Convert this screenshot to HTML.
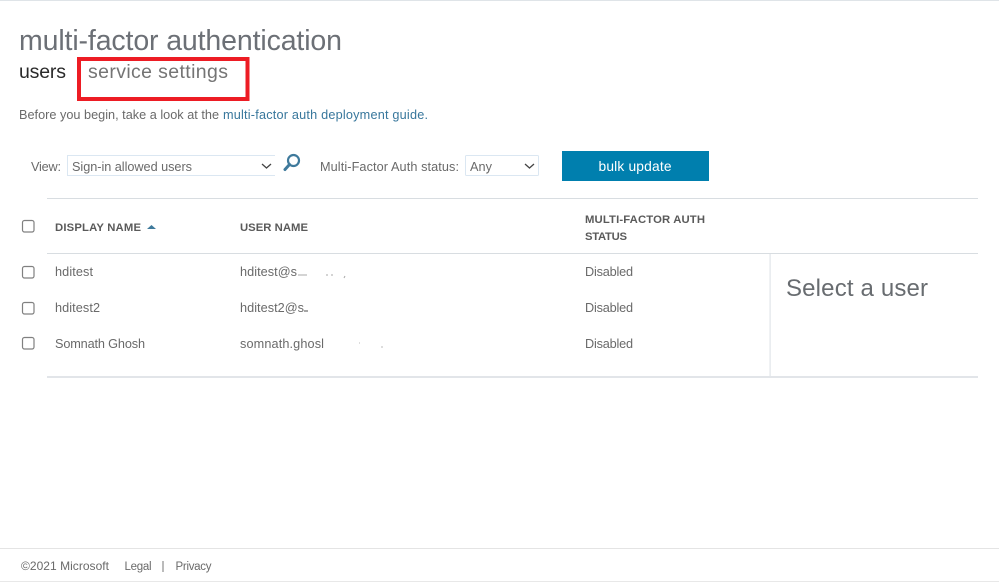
<!DOCTYPE html>
<html lang="en">
<head>
<meta charset="utf-8">
<title>multi-factor authentication</title>
<style>
html,body{margin:0;padding:0;background:#fff;width:999px;height:582px;overflow:hidden}
svg{display:block}
text{font-family:"Liberation Sans",sans-serif;fill:#6a6a6a;font-size:12.700px}
.b{font-weight:bold;fill:#5a5a5a;font-size:11.300px}
</style>
</head>
<body>
<svg width="999" height="582" viewBox="0 0 999 582" xmlns="http://www.w3.org/2000/svg">
<rect x="0" y="0" width="999" height="1" fill="#dfe4e8"/>

<text x="19" y="50" style="font-size:28.500px;fill:#6c7076" textLength="323">multi-factor authentication</text>
<text x="19" y="78" style="font-size:19.500px;fill:#2a2a2a" textLength="47">users</text>
<text x="88" y="78" style="font-size:19.500px;fill:#747474" textLength="140">service settings</text>
<rect x="79" y="59" width="168.500" height="40" fill="none" stroke="#ed1c24" stroke-width="4"/>

<text x="19" y="119" textLength="200">Before you begin, take a look at the</text>
<text x="223" y="119" style="fill:#38779c" textLength="205">multi-factor auth deployment guide.</text>

<text x="31" y="171" textLength="30">View:</text>
<path d="M275 155.500H67.500V175.500H275" fill="none" stroke="#dbe7f2"/>
<text x="72" y="171" textLength="120">Sign-in allowed users</text>
<path d="M262 164l4.500 4 4.500-4" fill="none" stroke="#444" stroke-width="1.300"/>
<circle cx="293.500" cy="160.500" r="5.500" fill="none" stroke="#3f7a9c" stroke-width="2.200"/>
<path d="M289.500 164.500l-4.500 5" stroke="#3f7a9c" stroke-width="3" stroke-linecap="round"/>

<text x="320" y="171" textLength="139">Multi-Factor Auth status:</text>
<rect x="465.500" y="155.500" width="73" height="20" rx="1" fill="#fff" stroke="#dbe7f2"/>
<text x="470" y="171" textLength="22">Any</text>
<path d="M525 164l4.500 4 4.500-4" fill="none" stroke="#444" stroke-width="1.300"/>

<rect x="562" y="151" width="147" height="30" fill="#007fae"/>
<text x="598.500" y="171" style="font-size:13.800px;fill:#fff" textLength="73">bulk update</text>

<rect x="47" y="198" width="931" height="1" fill="#d8dde1"/>
<rect x="47" y="253" width="931" height="1" fill="#d8dde1"/>
<rect x="47" y="376" width="931" height="2" fill="#e2e5e9"/>
<rect x="769.500" y="254" width="1.200" height="122" fill="#e2e5e9"/>

<rect x="22.500" y="220.500" width="11.500" height="11.500" rx="2" fill="#fff" stroke="#808080" stroke-width="1.200"/>
<rect x="22.500" y="266.500" width="11.500" height="11.500" rx="2" fill="#fff" stroke="#808080" stroke-width="1.200"/>
<rect x="22.500" y="302.500" width="11.500" height="11.500" rx="2" fill="#fff" stroke="#808080" stroke-width="1.200"/>
<rect x="22.500" y="337.500" width="11.500" height="11.500" rx="2" fill="#fff" stroke="#808080" stroke-width="1.200"/>

<text class="b" x="55" y="231" textLength="86">DISPLAY NAME</text>
<path d="M147 229l4.500-4 4.500 4z" fill="#3f7a9c"/>
<text class="b" x="240" y="231" textLength="68">USER NAME</text>
<text class="b" x="585" y="223" textLength="120">MULTI-FACTOR AUTH</text>
<text class="b" x="585" y="240" textLength="42">STATUS</text>

<text x="55" y="276" textLength="38">hditest</text>
<text x="55" y="312" textLength="45">hditest2</text>
<text x="55" y="348" textLength="90">Somnath Ghosh</text>

<text x="240" y="276" textLength="57">hditest@s</text>
<path d="M298 275h9M326 275h2M331 275h2M345 276l-1 2" stroke="#aaa" stroke-width="1"/>
<text x="240" y="312" textLength="64">hditest2@s</text>
<path d="M304 311h4" stroke="#888" stroke-width="1.500"/>
<text x="240" y="348" textLength="84">somnath.ghosl</text>
<path d="M359 343h1M381 347h2" stroke="#bbb" stroke-width="1"/>

<text x="585" y="276" textLength="48">Disabled</text>
<text x="585" y="312" textLength="48">Disabled</text>
<text x="585" y="348" textLength="48">Disabled</text>

<text x="786" y="296" style="font-size:24px;fill:#686c70" textLength="142">Select a user</text>

<rect x="0" y="548" width="999" height="1" fill="#e4e4e4"/>
<rect x="0" y="581" width="999" height="1" fill="#e8e8e8"/>
<text x="21" y="570" style="font-size:12px" textLength="88">©2021 Microsoft</text>
<text x="124.500" y="570" style="font-size:11.500px" textLength="27">Legal</text>
<rect x="162.500" y="561" width="1" height="11" fill="#777"/>
<text x="175.500" y="570" style="font-size:11.500px" textLength="36">Privacy</text>
</svg>
</body>
</html>
